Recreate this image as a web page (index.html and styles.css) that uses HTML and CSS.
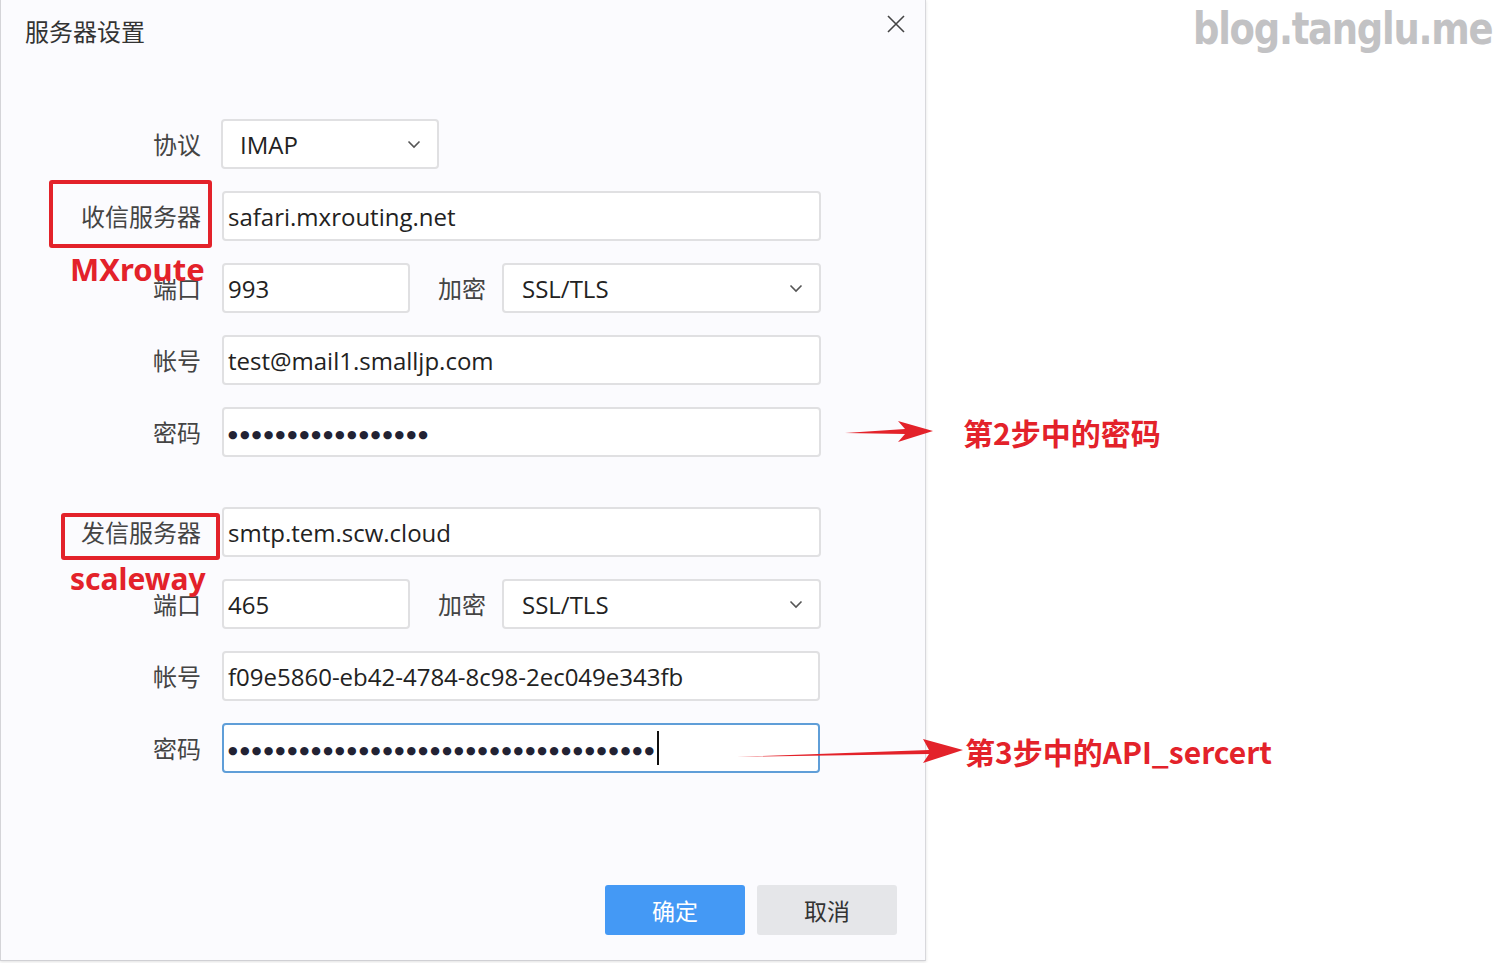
FILE: index.html
```html
<!DOCTYPE html>
<html lang="zh-CN">

<head>
    <meta charset="UTF-8">
    <meta name="viewport" content="width=device-width, initial-scale=1.0">
    <title>服务器设置</title>
    <link rel="stylesheet" href="styles.css">
</head>

<body>
    <div class="page">
        <div class="dialog">
            <div class="dialog-head">
                <h1>服务器设置</h1>
                <span class="close">
                    <svg width="20" height="20" viewBox="0 0 20 20">
                        <path d="M2 2 L18 18 M18 2 L2 18" stroke="#444" stroke-width="1.6" fill="none"/>
                    </svg>
                </span>
            </div>

            <div class="form">
                <div class="group">
                    <label class="label">协议</label>
                    <div class="field select select-short">
                        <span>IMAP</span>
                        <svg class="chevron" width="14" height="9" viewBox="0 0 14 9">
                            <path d="M1.5 1.5 L7 7 L12.5 1.5" stroke="#555" stroke-width="1.6" fill="none"/>
                        </svg>
                    </div>

                    <label class="label">收信服务器</label>
                    <div class="field">safari.mxrouting.net</div>

                    <label class="label">端口</label>
                    <div class="split">
                        <div class="field field-port">993</div>
                        <label class="label label-inline">加密</label>
                        <div class="field select select-grow">
                            <span>SSL/TLS</span>
                            <svg class="chevron" width="14" height="9" viewBox="0 0 14 9">
                                <path d="M1.5 1.5 L7 7 L12.5 1.5" stroke="#555" stroke-width="1.6" fill="none"/>
                            </svg>
                        </div>
                    </div>

                    <label class="label">帐号</label>
                    <div class="field">test@mail1.smalljp.com</div>

                    <label class="label">密码</label>
                    <div class="field"><span class="dots">●●●●●●●●●●●●●●●●●</span></div>
                </div>

                <div class="group">
                    <label class="label">发信服务器</label>
                    <div class="field">smtp.tem.scw.cloud</div>

                    <label class="label">端口</label>
                    <div class="split">
                        <div class="field field-port">465</div>
                        <label class="label label-inline">加密</label>
                        <div class="field select select-grow">
                            <span>SSL/TLS</span>
                            <svg class="chevron" width="14" height="9" viewBox="0 0 14 9">
                                <path d="M1.5 1.5 L7 7 L12.5 1.5" stroke="#555" stroke-width="1.6" fill="none"/>
                            </svg>
                        </div>
                    </div>

                    <label class="label">帐号</label>
                    <div class="field field-narrow">f09e5860-eb42-4784-8c98-2ec049e343fb</div>

                    <label class="label">密码</label>
                    <div class="field field-narrow field-focus"><span class="dots">●●●●●●●●●●●●●●●●●●●●●●●●●●●●●●●●●●●●</span><span class="caret"></span></div>
                </div>
            </div>

            <div class="actions">
                <button class="btn btn-primary">确定</button>
                <button class="btn btn-default">取消</button>
            </div>
        </div>

        <div class="watermark">blog.tanglu.me</div>

        <!-- red notes drawn over the dialog -->
        <div class="mark mark-in"></div>
        <div class="mark mark-out"></div>
        <div class="note note-mx">MXroute</div>
        <div class="note note-scw">scaleway</div>

        <svg class="arrow arrow-one" width="90" height="26" viewBox="0 0 90 26">
            <path d="M0 14 L60 10 L53 2 L88 12 L53 23 L60 15 Z" fill="#e3222a"/>
        </svg>
        <div class="note note-step2">第2步中的密码</div>

        <svg class="arrow arrow-two" width="228" height="28" viewBox="0 0 228 28">
            <path d="M0 20 L192 13 L186 2 L226 13 L186 26 L192 17 Z" fill="#e3222a"/>
        </svg>
        <div class="note note-step3">第3步中的API_sercert</div>
    </div>
</body>

</html>
```

FILE: styles.css
```css
body {
  margin: 0;
  background: #ffffff;
  font-family: "Open Sans", "Noto Sans CJK SC", sans-serif;
  color: #333333;
}

.page {
  position: relative;
  width: 1503px;
  height: 963px;
  overflow: hidden;
}

/* dialog */

.dialog {
  width: 926px;
  height: 961px;
  box-sizing: border-box;
  border-left: 1px solid #d4d4d8;
  border-right: 1px solid #d8d8dc;
  border-bottom: 1px solid #d0d0d4;
  box-shadow: 0 1px 3px rgba(0, 0, 0, 0.12);
  background: #fbfbfe;
  display: flex;
  flex-direction: column;
}

.dialog-head {
  display: flex;
  justify-content: space-between;
  align-items: flex-start;
  padding: 13px 19px 0 24px;
}

.dialog-head h1 {
  margin: 0;
  font-family: "Noto Sans CJK SC", sans-serif;
  font-size: 24px;
  font-weight: 400;
  line-height: 36px;
  color: #333333;
}

.close {
  display: flex;
  padding-top: 1px;
}

.form {
  display: flex;
  flex-direction: column;
  gap: 50px;
  margin-top: 70px;
}

.group {
  display: grid;
  grid-template-columns: 200px 600px;
  column-gap: 20px;
  row-gap: 22px;
  align-items: center;
}

.label {
  text-align: right;
  font-family: "Noto Sans CJK SC", sans-serif;
  font-size: 24px;
  color: #444444;
  line-height: 50px;
}

.field {
  height: 50px;
  box-sizing: border-box;
  border: 2px solid #e0e0e2;
  border-radius: 4px;
  background: #ffffff;
  padding: 0 6px 0 4px;
  display: flex;
  align-items: center;
  font-size: 24px;
  color: #222222;
  white-space: nowrap;
  margin-left: 1px;
}

.field-narrow {
  width: 598px;
}

.field-focus {
  border-color: #5f9ed8;
}

.select {
  justify-content: space-between;
  padding: 0 16px 0 17px;
}

.select-short {
  width: 218px;
  margin-left: 0;
}

.chevron {
  display: block;
}

.split {
  display: flex;
  align-items: center;
}

.field-port {
  width: 188px;
}

.label-inline {
  margin: 0 16px 0 28px;
}

.select-grow {
  flex: 1;
  margin-left: 0;
  padding-left: 18px;
}

.dots {
  font-family: "DejaVu Sans", sans-serif;
  font-size: 11px;
  letter-spacing: 2.3px;
  color: #222233;
  padding-top: 4px;
}

.caret {
  width: 2px;
  height: 34px;
  background: #111111;
  margin-left: 1px;
}

.actions {
  margin-top: auto;
  display: flex;
  justify-content: flex-end;
  gap: 12px;
  padding: 0 28px 25px 0;
}

.btn {
  width: 140px;
  height: 50px;
  border: none;
  border-radius: 3px;
  font-family: "Noto Sans CJK SC", sans-serif;
  font-size: 23px;
  cursor: pointer;
}

.btn-primary {
  background: #4499f5;
  color: #ffffff;
}

.btn-default {
  background: #e5e6e9;
  color: #333333;
}

/* watermark */

.watermark {
  position: absolute;
  top: 0;
  left: 1193px;
  font-family: "DejaVu Sans", sans-serif;
  font-weight: bold;
  font-size: 44px;
  letter-spacing: -1.5px;
  line-height: 58px;
  color: #c2c2c4;
  transform: scaleX(0.84);
  transform-origin: left center;
  white-space: nowrap;
}

/* red notes */

.mark {
  position: absolute;
  border: 4px solid #e3222a;
  border-radius: 3px;
  box-sizing: border-box;
}

.mark-in {
  left: 49px;
  top: 180px;
  width: 163px;
  height: 68px;
}

.mark-out {
  left: 61px;
  top: 513px;
  width: 159px;
  height: 47px;
}

.note {
  position: absolute;
  font-family: "Noto Sans", "Noto Sans CJK SC", sans-serif;
  font-weight: bold;
  color: #e3222a;
  white-space: nowrap;
}

.note-mx {
  left: 70px;
  top: 247px;
  font-size: 31px;
  line-height: 44px;
}

.note-scw {
  left: 70px;
  top: 557px;
  font-size: 30px;
  line-height: 44px;
}

.note-step2 {
  left: 963px;
  top: 410px;
  font-family: "Noto Sans CJK SC", sans-serif;
  font-size: 30px;
  line-height: 44px;
}

.note-step3 {
  left: 965px;
  top: 729px;
  font-family: "Noto Sans CJK SC", sans-serif;
  font-size: 30px;
  line-height: 44px;
}

.arrow {
  position: absolute;
  display: block;
}

.arrow-one {
  left: 845px;
  top: 419px;
}

.arrow-two {
  left: 737px;
  top: 737px;
}
```
